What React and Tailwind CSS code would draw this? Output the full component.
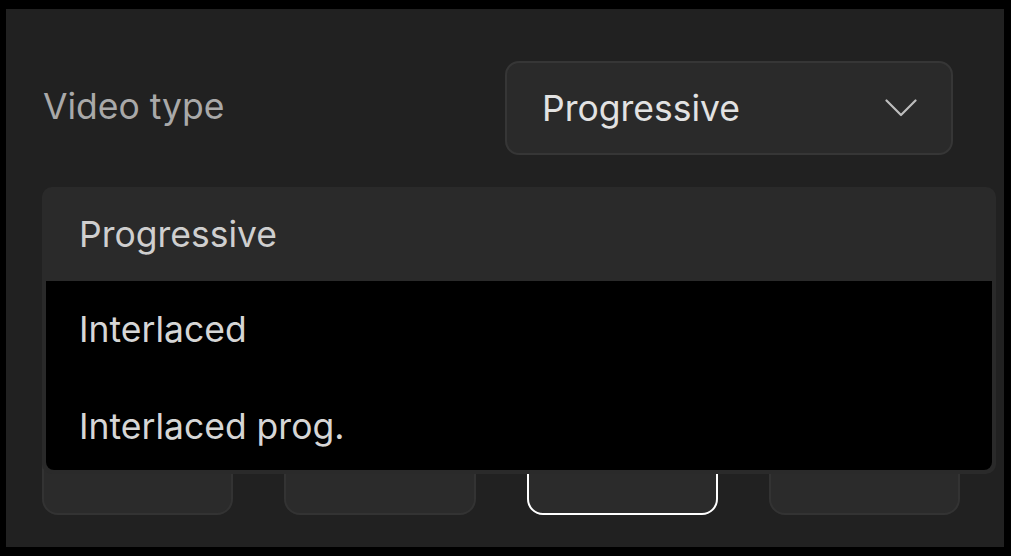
import React from "react";

function Chevron() {
  return (
    <svg width="32" height="18" viewBox="0 0 32 18" fill="none">
      <path d="M1.5 1.5 L16 16 L30.5 1.5" stroke="#bdbdbd" strokeWidth="2.2" strokeLinecap="round" strokeLinejoin="round" />
    </svg>
  );
}

export default function App() {
  const font = { fontFamily: "Inter, 'Noto Sans', sans-serif" };
  return (
    <div className="w-[1011px] h-[556px] bg-black pt-[9px] pl-[6px]" style={font}>
      <div className="relative w-[998px] h-[538px] bg-[#212121] flex flex-col">
        <div className="flex items-center justify-between pl-[37px] pr-[51px] pt-[52px]">
          <span className="text-[35.5px] leading-none text-[#a9a9a9] -mt-[2px]">Video type</span>
          <div className="w-[448px] h-[94px] rounded-[14px] border-2 border-[#363636] bg-[#2a2a2a] flex items-center justify-between pl-[35px] pr-[34px]">
            <span className="text-[35.5px] leading-none text-[#e2e2e2] pt-[2px]">Progressive</span>
            <Chevron />
          </div>
        </div>

        <div className="mt-auto mb-[32px] px-[36px] grid grid-cols-4 gap-[51px] w-[990px]">
          <div className="h-[90px] rounded-[16px] border-2 border-[#333333] bg-[#2b2b2b]" />
          <div className="h-[90px] rounded-[16px] border-2 border-[#333333] bg-[#2b2b2b]" />
          <div className="h-[90px] rounded-[16px] border-2 border-white bg-[#2b2b2b]" />
          <div className="h-[90px] rounded-[16px] border-2 border-[#333333] bg-[#2b2b2b]" />
        </div>

        <div className="absolute left-[36px] right-[8px] top-[178px] rounded-[10px] bg-[#2a2a2a] flex flex-col">
          <div className="h-[94px] flex items-center pl-[37px] pt-[2px] text-[35.5px] leading-none text-[#cfcfcf]">Progressive</div>
          <div className="mx-[4px] mb-[4px] bg-black rounded-b-[8px] flex flex-col">
            <div className="h-[96px] flex items-center pl-[33px] pt-[2px] text-[35.5px] leading-none text-[#d6d6d6]">Interlaced</div>
            <div className="h-[93px] flex items-center pl-[33px] pt-[6px] text-[35.5px] leading-none text-[#d6d6d6]">Interlaced prog.</div>
          </div>
        </div>
      </div>
    </div>
  );
}
